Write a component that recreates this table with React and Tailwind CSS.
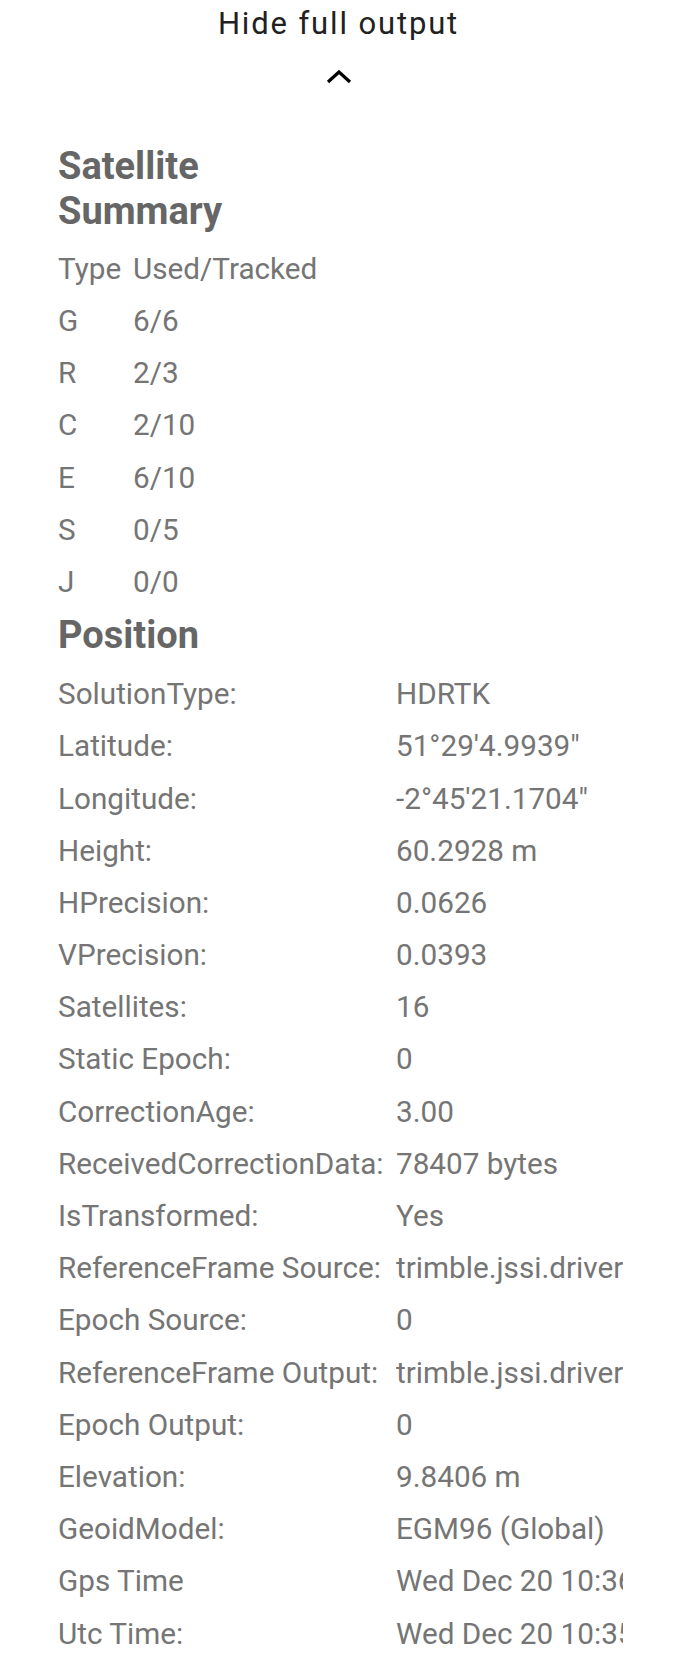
import React from "react";

const satellites = [
  ["G", "6/6"],
  ["R", "2/3"],
  ["C", "2/10"],
  ["E", "6/10"],
  ["S", "0/5"],
  ["J", "0/0"],
];

const position = [
  ["SolutionType:", "HDRTK"],
  ["Latitude:", "51°29'4.9939\""],
  ["Longitude:", "-2°45'21.1704\""],
  ["Height:", "60.2928 m"],
  ["HPrecision:", "0.0626"],
  ["VPrecision:", "0.0393"],
  ["Satellites:", "16"],
  ["Static Epoch:", "0"],
  ["CorrectionAge:", "3.00"],
  ["ReceivedCorrectionData:", "78407 bytes"],
  ["IsTransformed:", "Yes"],
  ["ReferenceFrame Source:", "trimble.jssi.driver.proxydriver.referenceframe"],
  ["Epoch Source:", "0"],
  ["ReferenceFrame Output:", "trimble.jssi.driver.proxydriver.referenceframe"],
  ["Epoch Output:", "0"],
  ["Elevation:", "9.8406 m"],
  ["GeoidModel:", "EGM96 (Global)"],
  ["Gps Time", "Wed Dec 20 10:36:12 GMT 2023"],
  ["Utc Time:", "Wed Dec 20 10:35:54 GMT 2023"],
];

export default function App() {
  return (
    <div className="w-[677px] min-h-[1674px] bg-white font-['Roboto',sans-serif]">
      {/* Toggle */}
      <div className="flex flex-col items-center pt-[6px]">
        <span className="text-[31px] leading-[36px] tracking-[0.06em] text-[#212121]">
          Hide full output
        </span>
        <svg width="28" height="20" viewBox="0 0 28 20" className="mt-[25px]">
          <path d="M3 15 L14 5 L25 15" fill="none" stroke="#000" strokeWidth="3.2" />
        </svg>
      </div>

      <div className="pl-[58px]">
        {/* Satellite summary */}
        <h2 className="w-[270px] mt-[57px] text-[38px] leading-[45px] font-bold text-[#666666]">
          Satellite Summary
        </h2>
        <div className="mt-[9px] text-[29.7px] text-[#757575]">
          <div className="flex h-[52.2px] items-center">
            <span className="w-[75px]">Type</span>
            <span>Used/Tracked</span>
          </div>
          {satellites.map(([t, v]) => (
            <div key={t} className="flex h-[52.2px] items-center">
              <span className="w-[75px]">{t}</span>
              <span>{v}</span>
            </div>
          ))}
        </div>

        {/* Position */}
        <h2 className="mt-[5px] text-[38px] leading-[45px] font-bold text-[#666666]">Position</h2>
        <div className="mt-[10px] pb-[15px] text-[29.7px] text-[#757575]">
          {position.map(([k, v]) => (
            <div key={k} className="flex h-[52.2px] items-center whitespace-nowrap">
              <span className="w-[338px]">{k}</span>
              <span className="w-[227px] overflow-hidden">{v}</span>
            </div>
          ))}
        </div>
      </div>
    </div>
  );
}
